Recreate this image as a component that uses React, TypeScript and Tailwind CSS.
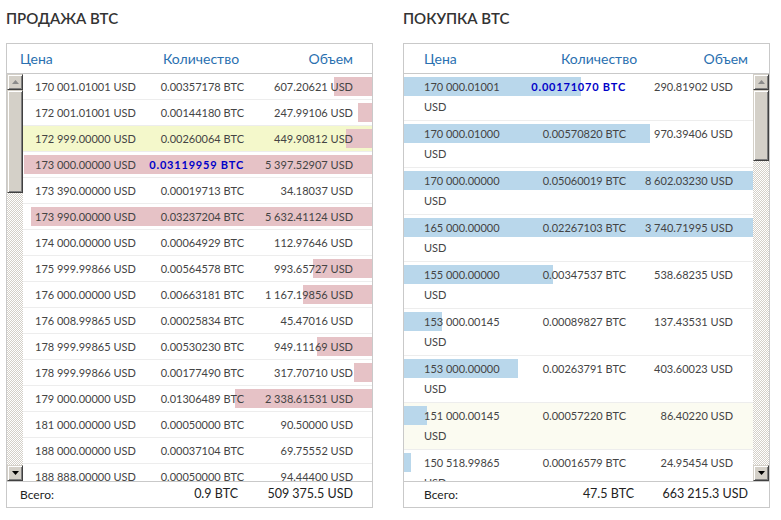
import React from "react";

type Row = { p: string; q: string; v: string; bar: number; bold?: boolean; bg?: string };

const sell: Row[] = [
  { p: "170 001.01001 USD", q: "0.00357178 BTC", v: "607.20621 USD", bar: 38 },
  { p: "172 001.01001 USD", q: "0.00144180 BTC", v: "247.99106 USD", bar: 14 },
  { p: "172 999.00000 USD", q: "0.00260064 BTC", v: "449.90812 USD", bar: 26, bg: "yellow" },
  { p: "173 000.00000 USD", q: "0.03119959 BTC", v: "5 397.52907 USD", bar: 348, bold: true },
  { p: "173 390.00000 USD", q: "0.00019713 BTC", v: "34.18037 USD", bar: 0 },
  { p: "173 990.00000 USD", q: "0.03237204 BTC", v: "5 632.41124 USD", bar: 341 },
  { p: "174 000.00000 USD", q: "0.00064929 BTC", v: "112.97646 USD", bar: 0 },
  { p: "175 999.99866 USD", q: "0.00564578 BTC", v: "993.65727 USD", bar: 59 },
  { p: "176 000.00000 USD", q: "0.00663181 BTC", v: "1 167.19856 USD", bar: 69 },
  { p: "176 008.99865 USD", q: "0.00025834 BTC", v: "45.47016 USD", bar: 0 },
  { p: "178 999.99865 USD", q: "0.00530230 BTC", v: "949.11169 USD", bar: 55 },
  { p: "178 999.99866 USD", q: "0.00177490 BTC", v: "317.70710 USD", bar: 18 },
  { p: "179 000.00000 USD", q: "0.01306489 BTC", v: "2 338.61531 USD", bar: 137 },
  { p: "181 000.00000 USD", q: "0.00050000 BTC", v: "90.50000 USD", bar: 0 },
  { p: "188 000.00000 USD", q: "0.00037104 BTC", v: "69.75552 USD", bar: 0 },
  { p: "188 888.00000 USD", q: "0.00050000 BTC", v: "94.44400 USD", bar: 0 },
];

const buy: Row[] = [
  { p: "170 000.01001 USD", q: "0.00171070 BTC", v: "290.81902 USD", bar: 177, bold: true },
  { p: "170 000.01000 USD", q: "0.00570820 BTC", v: "970.39406 USD", bar: 246 },
  { p: "170 000.00000 USD", q: "0.05060019 BTC", v: "8 602.03230 USD", bar: 349 },
  { p: "165 000.00000 USD", q: "0.02267103 BTC", v: "3 740.71995 USD", bar: 349 },
  { p: "155 000.00000 USD", q: "0.00347537 BTC", v: "538.68235 USD", bar: 149 },
  { p: "153 000.00145 USD", q: "0.00089827 BTC", v: "137.43531 USD", bar: 38 },
  { p: "153 000.00000 USD", q: "0.00263791 BTC", v: "403.60023 USD", bar: 114 },
  { p: "151 000.00145 USD", q: "0.00057220 BTC", v: "86.40220 USD", bar: 23, bg: "cream" },
  { p: "150 518.99865 USD", q: "0.00016579 BTC", v: "24.95454 USD", bar: 7 },
];

function Arrow({ up }: { up: boolean }) {
  return (
    <svg width="7" height="4" viewBox="0 0 7 4">
      {up ? <path d="M3.5 0L7 4H0Z" fill="#8a8a8a" /> : <path d="M0 0H7L3.5 4Z" fill="#000" />}
    </svg>
  );
}

function Btn({ up }: { up: boolean }) {
  return (
    <div className="flex h-[16px] w-[16px] shrink-0 items-center justify-center border border-b-[#404040] border-l-[#d4d0c8] border-r-[#404040] border-t-[#d4d0c8] bg-[#d4d0c8] shadow-[inset_1px_1px_0_#ffffff,inset_-1px_-1px_0_#808080]">
      <Arrow up={up} />
    </div>
  );
}

function ScrollBar({ thumbClass }: { thumbClass: string }) {
  return (
    <div className="flex w-[16px] shrink-0 flex-col">
      <Btn up />
      <div
        className={
          "shrink-0 border border-b-[#404040] border-l-[#d4d0c8] border-r-[#404040] border-t-[#d4d0c8] bg-[#d4d0c8] shadow-[inset_1px_1px_0_#ffffff,inset_-1px_-1px_0_#808080] " +
          thumbClass
        }
      />
      <div className="flex-1 bg-[image:repeating-conic-gradient(#d4d0c8_0%_25%,#ffffff_0%_50%)] bg-[length:2px_2px]" />
      <Btn up={false} />
    </div>
  );
}

const font = "font-['Lato','Open_Sans','Noto_Sans',sans-serif]";

function SellRow({ r }: { r: Row }) {
  return (
    <div
      className={
        "relative flex h-[26px] shrink-0 border-b border-[#ededed] pt-[3px] text-[11px] leading-[19px] text-[#444] " +
        (r.bg === "yellow" ? "bg-[#f4f8cb]" : "")
      }
    >
      {r.bar > 0 && (
        <div className="absolute right-0 top-[3px] h-[19px] bg-[#e6c2c6]" style={{ width: r.bar }} />
      )}
      <span className="relative w-[122px] shrink-0 whitespace-nowrap pl-[12px]">{r.p}</span>
      <span
        className={
          "relative w-[99px] shrink-0 whitespace-nowrap text-right " +
          (r.bold ? "font-bold tracking-[0.8px] text-[#0000c8]" : "")
        }
      >
        {r.q}
      </span>
      <span className="relative flex-1 whitespace-nowrap pr-[19px] text-right">{r.v}</span>
    </div>
  );
}

function BuyRow({ r }: { r: Row }) {
  return (
    <div
      className={
        "relative flex h-[47px] shrink-0 border-b border-[#ededed] pt-[3px] text-[11px] leading-[20px] text-[#444] " +
        (r.bg === "cream" ? "bg-[#fbfbf1]" : "")
      }
    >
      {r.bar > 0 && (
        <div className="absolute left-0 top-[3px] h-[19px] bg-[#b9d7eb]" style={{ width: r.bar }} />
      )}
      <span className="relative w-[104px] shrink-0 pl-[20px]">{r.p}</span>
      <span
        className={
          "relative w-[118px] shrink-0 whitespace-nowrap text-right " +
          (r.bold ? "font-bold tracking-[0.8px] text-[#0000c8]" : "")
        }
      >
        {r.q}
      </span>
      <span className="relative flex-1 whitespace-nowrap pr-[20px] text-right">{r.v}</span>
    </div>
  );
}

export default function App() {
  return (
    <div className={"flex h-[520px] w-[781px] gap-[30px] bg-white px-[6px] pt-[8px] " + font}>
      {/* SELL */}
      <div className="flex w-[367px] flex-col">
        <div className="mb-[15px] text-[15px] font-semibold leading-[20px] text-[#333]">ПРОДАЖА BTC</div>
        <div className="flex flex-col border border-[#c9c9c9]">
          <div className="flex h-[30px] items-center border-b border-[#c9c9c9] text-[14px] text-[#2a70b0]">
            <span className="w-[156px] pl-[13px]">Цена</span>
            <span>Количество</span>
            <span className="flex-1 pr-[19px] text-right">Объем</span>
          </div>
          <div className="flex h-[407px]">
            <ScrollBar thumbClass="h-[103px]" />
            <div className="flex flex-1 flex-col overflow-hidden">
              {sell.map((r, i) => (
                <SellRow key={i} r={r} />
              ))}
            </div>
          </div>
          <div className="flex h-[26px] items-center border-t border-[#c9c9c9] text-[#222]">
            <span className="flex-1 pl-[13px] text-[12px]">Всего:</span>
            <span className="text-[12.5px]">0.9 BTC</span>
            <span className="w-[134px] pr-[19px] text-right text-[12.5px]">509 375.5 USD</span>
          </div>
        </div>
      </div>

      {/* BUY */}
      <div className="flex w-[367px] flex-col">
        <div className="mb-[15px] text-[15px] font-semibold leading-[20px] text-[#333]">ПОКУПКА BTC</div>
        <div className="flex flex-col border border-[#c9c9c9]">
          <div className="flex h-[30px] items-center border-b border-[#c9c9c9] text-[14px] text-[#2a70b0]">
            <span className="w-[157px] pl-[20px]">Цена</span>
            <span>Количество</span>
            <span className="flex-1 pr-[21px] text-right">Объем</span>
          </div>
          <div className="flex h-[407px]">
            <div className="flex flex-1 flex-col overflow-hidden">
              {buy.map((r, i) => (
                <BuyRow key={i} r={r} />
              ))}
            </div>
            <ScrollBar thumbClass="h-[71px]" />
          </div>
          <div className="flex h-[26px] items-center border-t border-[#c9c9c9] text-[#222]">
            <span className="flex-1 pl-[20px] text-[12px]">Всего:</span>
            <span className="text-[12.5px]">47.5 BTC</span>
            <span className="w-[135px] pr-[21px] text-right text-[12.5px]">663 215.3 USD</span>
          </div>
        </div>
      </div>
    </div>
  );
}
